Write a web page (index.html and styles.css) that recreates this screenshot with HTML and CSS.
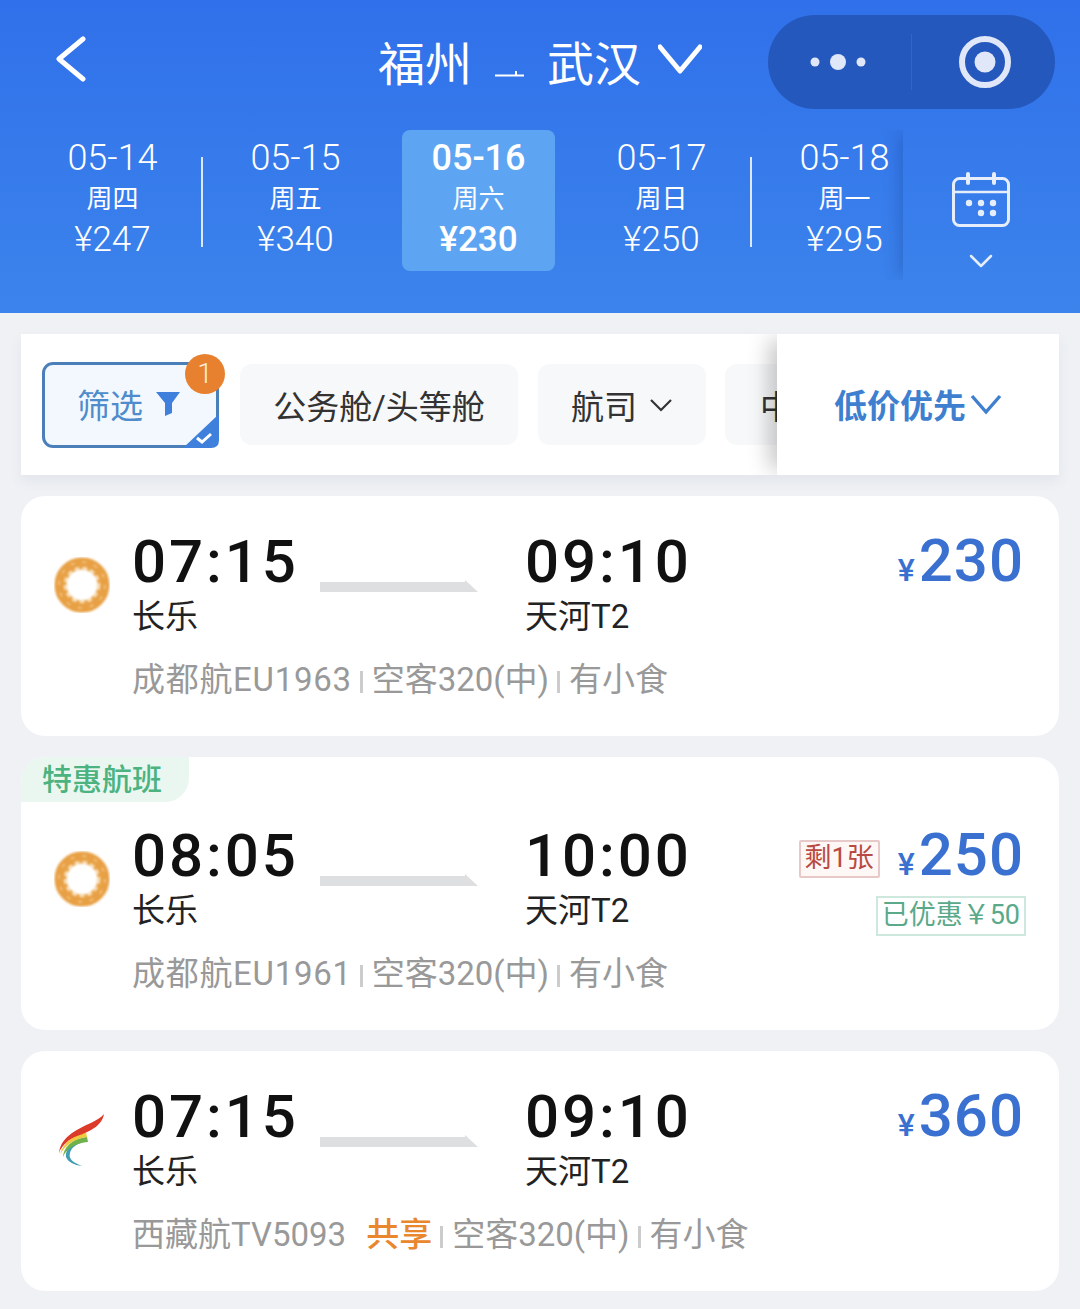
FILE: index.html
```html
<!DOCTYPE html>
<html lang="zh-CN">
<head>
    <meta charset="UTF-8">
    <meta name="viewport" content="width=device-width, initial-scale=1.0">
    <title>福州 - 武汉</title>
    <link rel="stylesheet" href="styles.css">
</head>
<body>
    <header class="top">
        <div class="nav">
            <svg class="back" width="32" height="46" viewBox="0 0 32 46"><path d="M28 3 L4 23 L28 43" fill="none" stroke="#fff" stroke-width="5" stroke-linecap="round" stroke-linejoin="round"/></svg>
            <div class="route">
                <span>福州</span>
                <svg class="route-arrow" width="30" height="12" viewBox="0 0 30 12"><path d="M0 10.5 H29 M21 10.5 V6" fill="none" stroke="#fff" stroke-width="2"/></svg>
                <span>武汉</span>
                <svg class="route-down" width="44" height="30" viewBox="0 0 44 30"><path d="M2 3 L22 27 L42 3" fill="none" stroke="#fff" stroke-width="5" stroke-linecap="round" stroke-linejoin="round"/></svg>
            </div>
            <div class="capsule">
                <svg width="60" height="20" viewBox="0 0 60 20"><circle cx="7" cy="10" r="4.5" fill="#dfe7f8"/><circle cx="30" cy="10" r="8" fill="#dfe7f8"/><circle cx="53" cy="10" r="4.5" fill="#dfe7f8"/></svg>
                <span class="capsule-line"></span>
                <svg width="54" height="54" viewBox="0 0 54 54"><circle cx="27" cy="27" r="23" fill="none" stroke="#dfe7f8" stroke-width="6"/><circle cx="27" cy="27" r="10.5" fill="#dfe7f8"/></svg>
            </div>
        </div>
        <div class="dates">
            <div class="date-strip">
                <div class="date-tab date-tab--split"><b>05-14</b><i>周四</i><em>¥247</em></div>
                <div class="date-tab"><b>05-15</b><i>周五</i><em>¥340</em></div>
                <div class="date-tab date-tab--on"><b>05-16</b><i>周六</i><em>¥230</em></div>
                <div class="date-tab date-tab--split"><b>05-17</b><i>周日</i><em>¥250</em></div>
                <div class="date-tab"><b>05-18</b><i>周一</i><em>¥295</em></div>
            </div>
            <div class="calendar">
                <svg width="60" height="56" viewBox="0 0 60 56">
                    <rect x="2.5" y="6.5" width="55" height="47" rx="6" fill="none" stroke="#e6eefc" stroke-width="3"/>
                    <path d="M3 20 H57" stroke="#e6eefc" stroke-width="2.5"/>
                    <path d="M17 2 V11 M43 2 V11" stroke="#e6eefc" stroke-width="4" stroke-linecap="round"/>
                    <circle cx="18" cy="31" r="3.2" fill="#e6eefc"/><circle cx="30" cy="31" r="3.2" fill="#e6eefc"/><circle cx="42" cy="31" r="3.2" fill="#e6eefc"/>
                    <circle cx="30" cy="41" r="3.2" fill="#e6eefc"/><circle cx="42" cy="41" r="3.2" fill="#e6eefc"/>
                </svg>
                <svg class="calendar-down" width="24" height="14" viewBox="0 0 24 14"><path d="M2 2 L12 12 L22 2" fill="none" stroke="#e6eefc" stroke-width="2.5" stroke-linecap="round" stroke-linejoin="round"/></svg>
            </div>
        </div>
    </header>

    <section class="filter-bar">
        <div class="chips">
            <div class="chip chip--filter">
                筛选
                <svg width="24" height="26" viewBox="0 0 24 26"><path d="M0 1 H24 L16 12 V22 L9 25 V12 Z" fill="#3f80dc"/></svg>
                <span class="chip-corner">
                    <svg width="36" height="34" viewBox="0 0 36 34"><path d="M36 0 V26 Q36 34 28 34 H0 Z" fill="#3f80dc"/><path d="M14 24 L19 28 L28 20" fill="none" stroke="#fff" stroke-width="3"/></svg>
                </span>
                <span class="chip-badge">1</span>
            </div>
            <div class="chip chip--wide">公务舱/头等舱</div>
            <div class="chip chip--airline">
                航司
                <svg width="24" height="14" viewBox="0 0 24 14"><path d="M2 2 L12 12 L22 2" fill="none" stroke="#333" stroke-width="2.2"/></svg>
            </div>
            <div class="chip chip--more">中转</div>
        </div>
        <div class="sort">
            低价优先
            <svg width="32" height="22" viewBox="0 0 32 22"><path d="M2 3 L16 19 L30 3" fill="none" stroke="#3f7fd0" stroke-width="3.4"/></svg>
        </div>
    </section>

    <main class="flights">
        <article class="card">
            <svg class="logo" width="56" height="56" viewBox="0 0 56 56">
                <g class="logo-soft">
                    <circle cx="28" cy="28" r="21.5" fill="none" stroke="#e8a044" stroke-width="12"/>
                    <circle cx="28" cy="28" r="23" fill="none" stroke="#f3c78a" stroke-width="1.6" stroke-dasharray="4 8"/>
                    <circle cx="28" cy="28" r="17" fill="none" stroke="#f9e2bf" stroke-width="2.6" stroke-dasharray="5 3"/>
                </g>
            </svg>
            <div class="card-main">
                <div class="legs">
                    <div class="stop stop--from"><div class="time">07:15</div><div class="airport">长乐</div></div>
                    <svg class="leg-arrow" width="158" height="12" viewBox="0 0 158 12"><path d="M0 2 H145 V0 L158 12 H0 Z" fill="#dedfe1"/></svg>
                    <div class="stop"><div class="time">09:10</div><div class="airport">天河T2</div></div>
                    <div class="fare"><div class="fare-row"><div class="price"><small>¥</small>230</div></div></div>
                </div>
                <div class="info"><span class="flight-no">成都航EU1963</span><span class="sep"></span>空客320(中)<span class="sep"></span>有小食</div>
            </div>
        </article>

        <article class="card card--deal">
            <div class="deal-tag">特惠航班</div>
            <svg class="logo" width="56" height="56" viewBox="0 0 56 56">
                <g class="logo-soft">
                    <circle cx="28" cy="28" r="21.5" fill="none" stroke="#e8a044" stroke-width="12"/>
                    <circle cx="28" cy="28" r="23" fill="none" stroke="#f3c78a" stroke-width="1.6" stroke-dasharray="4 8"/>
                    <circle cx="28" cy="28" r="17" fill="none" stroke="#f9e2bf" stroke-width="2.6" stroke-dasharray="5 3"/>
                </g>
            </svg>
            <div class="card-main">
                <div class="legs">
                    <div class="stop stop--from"><div class="time">08:05</div><div class="airport">长乐</div></div>
                    <svg class="leg-arrow" width="158" height="12" viewBox="0 0 158 12"><path d="M0 2 H145 V0 L158 12 H0 Z" fill="#dedfe1"/></svg>
                    <div class="stop"><div class="time">10:00</div><div class="airport">天河T2</div></div>
                    <div class="fare">
                        <div class="fare-row"><span class="left-tag">剩1张</span><div class="price"><small>¥</small>250</div></div>
                        <div class="saved">已优惠￥50</div>
                    </div>
                </div>
                <div class="info"><span class="flight-no">成都航EU1961</span><span class="sep"></span>空客320(中)<span class="sep"></span>有小食</div>
            </div>
        </article>

        <article class="card">
            <svg class="logo" width="50" height="56" viewBox="0 0 50 56">
                <path d="M25 29 C15 31 8 37 9 45 C11 50 17 53 25 54 C17 51 11 47 13 41 C14 36 19 32 27 30 Z" fill="#3f9db5"/>
                <path d="M30 25 C18 26 7 33 6 45 C9 37 18 31 31 30 Z" fill="#6fb14a"/>
                <path d="M29 20 C18 22 6 30 3 43 C7 34 16 27 30 25 Z" fill="#efc93f"/>
                <path d="M47 2 C42 9 26 13 15 21 C8 26 3 32 2 41 C5 33 12 27 20 24 C32 20 45 14 47 2 Z" fill="#dc3b2a"/>
            </svg>
            <div class="card-main">
                <div class="legs">
                    <div class="stop stop--from"><div class="time">07:15</div><div class="airport">长乐</div></div>
                    <svg class="leg-arrow" width="158" height="12" viewBox="0 0 158 12"><path d="M0 2 H145 V0 L158 12 H0 Z" fill="#dedfe1"/></svg>
                    <div class="stop"><div class="time">09:10</div><div class="airport">天河T2</div></div>
                    <div class="fare"><div class="fare-row"><div class="price"><small>¥</small>360</div></div></div>
                </div>
                <div class="info">西藏航TV5093<span class="shared">共享</span><span class="sep"></span>空客320(中)<span class="sep"></span>有小食</div>
            </div>
        </article>
    </main>
</body>
</html>
```

FILE: styles.css
```css
* { box-sizing: border-box; }
html, body { margin: 0; }
body { width: 1080px; height: 1309px; overflow: hidden; background: #eff1f5; font-family: Roboto, "Noto Sans CJK SC", sans-serif; color: #222; }

/* header */
.top { height: 313px; background: linear-gradient(to bottom, #3070ea, #3c84ec); color: #fff; }
.nav { display: flex; align-items: center; height: 130px; padding: 15px 25px 21px 55px; }
.back { flex: none; margin-top: -6px; }
.route { display: flex; align-items: center; margin-left: auto; margin-top: 6px; font-size: 47px; line-height: 56px; }
.route-arrow { margin: 12px 22px 0 23px; }
.route-down { margin: -12px 0 0 17px; }
.capsule { display: flex; align-items: center; width: 287px; height: 94px; margin-left: 66px; padding-left: 40px; border-radius: 47px; background: #2558bd; }
.capsule-line { width: 1px; height: 56px; margin: 0 46px 0 43px; background: #3265c9; }

.dates { display: flex; height: 183px; }
.date-strip { display: flex; flex: none; width: 903px; height: 150px; padding-left: 21px; overflow: hidden; }
.date-tab { position: relative; flex: none; width: 183px; height: 141px; padding: 8px 0 12px; text-align: center; font-size: 36px; line-height: 40px; }
.date-tab b, .date-tab i, .date-tab em { display: block; font-style: normal; font-weight: 300; }
.date-tab i { margin-top: 1px; font-size: 26px; font-weight: 400; }
.date-tab em { margin-top: 1px; font-size: 35px; }
.date-tab--split::after { content: ""; position: absolute; right: 1px; top: 27px; width: 2px; height: 90px; background: #dce8fb; }
.date-tab--on::before { content: ""; position: absolute; z-index: 0; top: 0; bottom: 0; left: 15px; right: 15px; border-radius: 8px; background: #5da5f2; }
.date-tab--on b, .date-tab--on i, .date-tab--on em { position: relative; }
.date-tab--on b, .date-tab--on em { font-weight: 500; }

.calendar { display: flex; flex: 1; flex-direction: column; align-items: center; height: 150px; padding: 42px 21px 0 0; box-shadow: -8px 0 14px -4px rgba(20, 60, 140, 0.3); clip-path: inset(0 0 0 -24px); }
.calendar-down { margin-top: 26px; }

/* filters */
.filter-bar { display: flex; height: 141px; margin: 21px 21px 0; background: #fff; box-shadow: 0 6px 12px rgba(90, 100, 120, 0.08); }
.chips { display: flex; flex: 1; min-width: 0; align-items: center; gap: 20px; padding-left: 21px; overflow: hidden; }
.chip { display: flex; flex: none; align-items: center; height: 81px; border-radius: 12px; background: #f7f8fa; font-size: 33px; color: #333; }
.chip--filter { position: relative; width: 177px; height: 86px; padding: 0 0 2px 32px; gap: 13px; border: 3px solid #4a7fb9; border-radius: 11px; background: #f3f8fe; color: #4f8ccb; }
.chip-corner { position: absolute; right: -3px; bottom: -3px; width: 36px; height: 34px; }
.chip-corner svg { display: block; }
.chip-badge { position: absolute; top: -11px; right: -9px; width: 40px; height: 40px; border-radius: 50%; background: #e8812f; color: #fdeedd; text-align: center; font-size: 28px; line-height: 40px; font-weight: 300; }
.chip--wide { width: 278px; margin-left: 1px; justify-content: center; }
.chip--airline { width: 168px; justify-content: center; gap: 12px; }
.chip--more { width: 160px; padding-left: 35px; margin-left: -1px; }
.sort { display: flex; flex: none; align-items: center; width: 282px; padding: 0 0 2px 57px; gap: 4px; background: #fff; box-shadow: -14px 0 20px -6px rgba(0, 0, 0, 0.22); clip-path: inset(0 0 0 -40px); font-size: 33px; font-weight: 700; color: #3f7fd0; }

/* flight cards */
.flights { display: flex; flex-direction: column; gap: 21px; padding: 21px 21px 0; }
.card { position: relative; display: flex; gap: 22px; padding: 34px 35px 35px 33px; border-radius: 24px; background: #fff; }
.card--deal { padding-top: 67px; }
.deal-tag { position: absolute; top: 0; left: 0; width: 168px; height: 45px; padding-right: 6px; border-radius: 24px 0 24px 0; background: #eaf7f0; color: #4cb380; text-align: center; font-size: 30px; line-height: 45px; font-weight: 500; }
.logo { flex: none; width: 56px; margin-top: 27px; }
.logo-soft { filter: blur(0.8px); }
.card-main { flex: 1; min-width: 0; }
.legs { display: flex; align-items: flex-start; }
.stop--from { width: 188px; }
.time { padding-top: 1px; height: 62px; font-size: 60px; line-height: 62px; font-weight: 500; letter-spacing: 2.9px; color: #111; white-space: nowrap; }
.airport { margin-top: 4px; font-size: 33px; line-height: 42px; color: #222; }
.leg-arrow { flex: none; margin: 50px 47px 0 0; }
.fare { display: flex; flex-direction: column; align-items: flex-end; margin-left: auto; }
.fare-row { display: flex; align-items: center; gap: 18px; }
.price { font-size: 60px; line-height: 62px; font-weight: 500; letter-spacing: 1px; color: #3a70d0; white-space: nowrap; }
.price small { margin-right: 3px; font-size: 32px; line-height: 1; font-weight: 500; }
.left-tag { margin-top: 8px; padding: 0 4px; height: 38px; border: 2px solid #e8c9c9; border-radius: 2px; background: #fdf7f6; color: #b84a42; font-size: 27px; line-height: 33px; white-space: nowrap; }
.saved { height: 40px; margin: 10px -2px -4px 0; padding: 0 4px; border: 2px solid #cfe8dd; color: #5aa98a; font-size: 27px; line-height: 34px; white-space: nowrap; }
.info { display: flex; align-items: center; margin-top: 21px; font-size: 33px; line-height: 42px; color: #999; white-space: nowrap; }
.flight-no { letter-spacing: 0.7px; }
.sep { width: 3px; height: 22px; margin: 4px 9px 0 8px; background: #ccc; }
.shared { margin-left: 20px; color: #e8872e; font-weight: 500; }
```
